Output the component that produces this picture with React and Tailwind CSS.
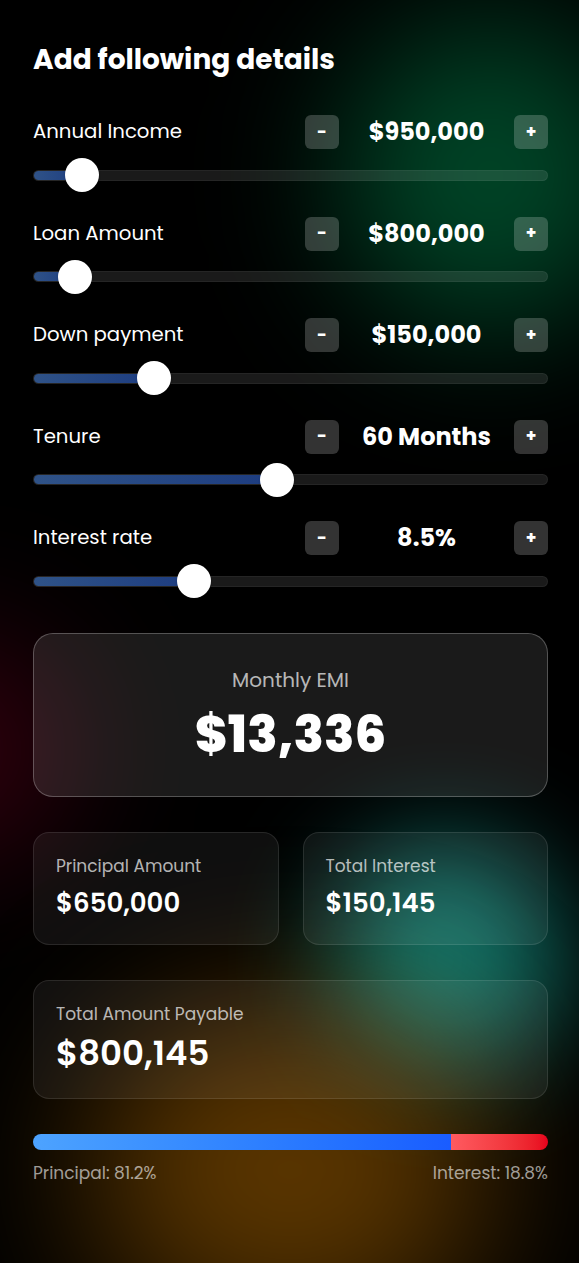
import React from 'react';

const FIELDS = [
  { label: 'Annual Income', value: '$950,000', pct: 9.5 },
  { label: 'Loan Amount', value: '$800,000', pct: 8.2 },
  { label: 'Down payment', value: '$150,000', pct: 23.5 },
  { label: 'Tenure', value: '60 Months', pct: 47.4 },
  { label: 'Interest rate', value: '8.5%', pct: 31.3 },
];

const StepButton = ({ children }) => (
  <button className="w-[34px] h-[34px] rounded-md bg-white/20 text-white text-[17px] font-bold leading-none flex items-center justify-center">
    {children}
  </button>
);

const SliderRow = ({ label, value, pct }) => (
  <div className="flex flex-col">
    <div className="flex items-center justify-between h-[34px]">
      <span className="text-[19.7px] text-white">{label}</span>
      <div className="flex items-center">
        <StepButton>-</StepButton>
        <span className="w-[175px] text-center text-[24px] font-bold text-white">{value}</span>
        <StepButton>+</StepButton>
      </div>
    </div>
    <div className="relative h-[34px] mt-[9px] flex items-center">
      <div className="w-full h-[11px] rounded-full bg-white/10 border border-white/5 overflow-hidden">
        <div
          className="h-full bg-gradient-to-r from-[#2f5287] to-[#1d3c80]"
          style={{ width: `${pct}%` }}
        />
      </div>
      <div
        className="absolute top-0 w-[34px] h-[34px] -ml-[17px] rounded-full bg-white shadow"
        style={{ left: `${pct}%` }}
      />
    </div>
  </div>
);

const StatCard = ({ label, value, big }) => (
  <div className={`rounded-2xl bg-white/[0.06] border border-white/10 px-[22px] pt-[21px] ${big ? 'h-[119px]' : 'h-[113px]'}`}>
    <div className="text-[17px] leading-[24px] text-white/70">{label}</div>
    <div
      className={`${big ? 'text-[34px] leading-[44px] mt-[5px]' : 'text-[26px] leading-[36px] mt-[7px]'} font-semibold text-white`}
    >
      {value}
    </div>
  </div>
);

export default function App() {
  return (
    <div className="relative min-h-screen w-full overflow-hidden bg-black text-white font-['Poppins','Open_Sans','Liberation_Sans',sans-serif]">
      {/* glow blobs */}
      <div className="absolute left-[340px] top-[20px] w-[300px] h-[310px] rounded-full bg-[#006a3c]/65 blur-[70px]" />
      <div className="absolute -left-[170px] top-[640px] w-[240px] h-[220px] rounded-full bg-[#4a0014]/70 blur-[70px]" />
      <div className="absolute left-[330px] top-[845px] w-[230px] h-[230px] rounded-full bg-[#138a7e]/85 blur-[55px]" />
      <div className="absolute left-[90px] top-[1010px] w-[400px] h-[320px] rounded-full bg-[#7a4800]/75 blur-[80px]" />

      <div className="relative pl-[33px] pr-[31px] pt-[40px] pb-[60px]">
        <h1 className="text-[28px] font-bold leading-[40px] text-white">Add following details</h1>

        <div className="mt-[35px] flex flex-col gap-[24.5px]">
          {FIELDS.map((f) => (
            <SliderRow key={f.label} {...f} />
          ))}
        </div>

        <div className="mt-[35px] h-[164px] rounded-[20px] bg-white/10 border border-white/25 flex flex-col items-center pt-[32px]">
          <div className="text-[20px] leading-[28px] text-white/70">Monthly EMI</div>
          <div className="mt-[11px] text-[50px] leading-[60px] font-extrabold text-white">$13,336</div>
        </div>

        <div className="mt-[35px] grid grid-cols-2 gap-[24px]">
          <StatCard label="Principal Amount" value="$650,000" />
          <StatCard label="Total Interest" value="$150,145" />
        </div>

        <div className="mt-[35px]">
          <StatCard label="Total Amount Payable" value="$800,145" big />
        </div>

        <div className="mt-[35px] h-[16px] rounded-full overflow-hidden flex">
          <div className="h-full w-[81.2%] bg-gradient-to-r from-[#4da3ff] to-[#1a5cff]" />
          <div className="h-full flex-1 bg-gradient-to-r from-[#ff5a60] to-[#e8001c]" />
        </div>
        <div className="mt-[11px] flex justify-between text-[17px] leading-[24px] text-white/60">
          <span>Principal: 81.2%</span>
          <span>Interest: 18.8%</span>
        </div>
      </div>
    </div>
  );
}
